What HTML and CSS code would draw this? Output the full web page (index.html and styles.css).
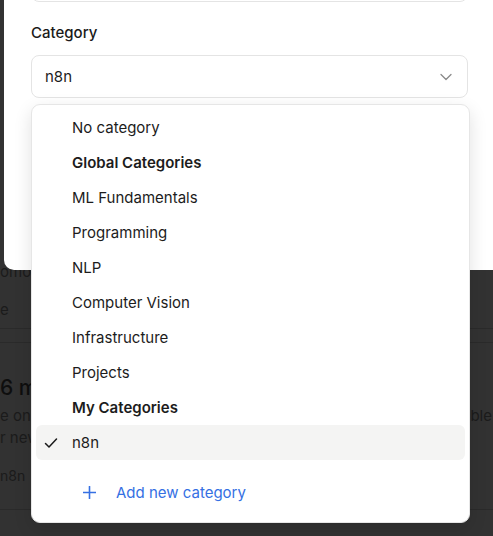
FILE: index.html
```html
<!DOCTYPE html>
<html lang="en">
<head>
<meta charset="utf-8">
<title>Category</title>
<link rel="stylesheet" href="styles.css">
</head>
<body>
<div class="bg">
  <div class="bg-text bg-a">omor</div>
  <div class="bg-text bg-b">e</div>
  <div class="rule rule-1"></div>
  <div class="rule rule-2"></div>
  <div class="bg-title">6 m</div>
  <div class="bg-row"><span class="bg-text">e on</span><span class="bg-text">ble</span></div>
  <div class="bg-text bg-c">r new</div>
  <div class="bg-small">n8n</div>
  <div class="rule rule-3"></div>
</div>

<div class="modal">
  <div class="field top-input"></div>
  <div class="label">Category</div>
  <div class="field select">
    <span>n8n</span>
    <svg class="chev" width="12" height="8" viewBox="0 0 12 8"><path d="M1 1.5 L6 6.5 L11 1.5" fill="none" stroke="#8a8a8a" stroke-width="1.3" stroke-linecap="round" stroke-linejoin="round"/></svg>
  </div>
</div>

<div class="menu">
  <div class="item"><span class="mark"></span>No category</div>
  <div class="item group"><span class="mark"></span>Global Categories</div>
  <div class="item"><span class="mark"></span>ML Fundamentals</div>
  <div class="item"><span class="mark"></span>Programming</div>
  <div class="item"><span class="mark"></span>NLP</div>
  <div class="item"><span class="mark"></span>Computer Vision</div>
  <div class="item"><span class="mark"></span>Infrastructure</div>
  <div class="item"><span class="mark"></span>Projects</div>
  <div class="item group"><span class="mark"></span>My Categories</div>
  <div class="item selected"><span class="mark"><svg width="14" height="14" viewBox="0 0 14 14"><path d="M1.5 7.5 L5 11 L12.5 3" fill="none" stroke="#1a1a1a" stroke-width="1.5" stroke-linecap="round" stroke-linejoin="round"/></svg></span>n8n</div>
  <div class="item add"><svg class="plus" width="13" height="13" viewBox="0 0 13 13"><path d="M6.5 0.5 V12.5 M0.5 6.5 H12.5" fill="none" stroke="#3570e3" stroke-width="1.6" stroke-linecap="round"/></svg>Add new category</div>
</div>
</body>
</html>
```
FILE: styles.css
```css
html, body {
  margin: 0;
  padding: 0;
}
body {
  width: 493px;
  height: 536px;
  overflow: hidden;
  position: relative;
  background: #323232;
  font-family: Inter, "Noto Sans", "Liberation Sans", sans-serif;
  font-size: 15px;
  color: #1c1c1c;
}

/* dimmed page behind the dialog */
.bg {
  display: flex;
  flex-direction: column;
  padding-top: 262px;
}
.bg-text {
  font-size: 15px;
  line-height: 20px;
  color: #1b1b1b;
  white-space: nowrap;
}
.bg-b { margin-top: 18px; }
.rule { height: 1px; background: #2a2a2a; }
.rule-1 { margin-top: 8px; }
.rule-2 { margin-top: 13px; }
.rule-3 { margin-top: 24px; }
.bg-title {
  margin-top: 32px;
  font-size: 21px;
  line-height: 26px;
  font-weight: 500;
  color: #0e0e0e;
  white-space: nowrap;
}
.bg-row {
  margin-top: 5px;
  display: flex;
  justify-content: space-between;
  padding-right: 1px;
}
.bg-c { margin-top: 2px; }
.bg-small {
  margin-top: 19px;
  font-size: 14px;
  line-height: 18px;
  color: #1b1b1b;
}

/* dialog */
.modal {
  position: absolute;
  left: 4px;
  top: -60px;
  width: 489px;
  height: 330px;
  box-sizing: border-box;
  padding: 20px 0 0 27px;
  background: #fff;
  border-radius: 10px 0 0 10px;
}
.field {
  width: 437px;
  box-sizing: border-box;
  border: 1px solid #e4e4e4;
  border-radius: 8px;
  background: #fff;
}
.top-input { height: 42px; }
.label {
  margin-top: 21px;
  font-size: 15px;
  line-height: 20px;
  font-weight: 500;
  color: #1a1a1a;
}
.select {
  margin-top: 12px;
  height: 43px;
  display: flex;
  align-items: center;
  justify-content: space-between;
  padding: 0 15px 0 13px;
  font-size: 15px;
  color: #1c1c1c;
}
.chev { display: block; }

/* dropdown popover */
.menu {
  position: absolute;
  left: 31px;
  top: 104px;
  width: 439px;
  box-sizing: border-box;
  padding: 5px 4px 12px 4px;
  background: #fff;
  border: 1px solid #e6e6e6;
  border-radius: 9px;
  box-shadow: 0 6px 18px rgba(0, 0, 0, 0.12);
}
.item {
  height: 35px;
  display: flex;
  align-items: center;
  font-size: 15px;
  color: #1c1c1c;
  border-radius: 6px;
  white-space: nowrap;
}
.mark {
  width: 28px;
  padding-left: 8px;
  display: flex;
  align-items: center;
}
.mark svg { display: block; }
.group { font-weight: 600; }
.selected { background: #f4f4f3; }
.add {
  margin-top: 15px;
  padding-left: 47px;
  color: #3570e3;
}
.plus { display: block; margin-right: 20px; }
```
